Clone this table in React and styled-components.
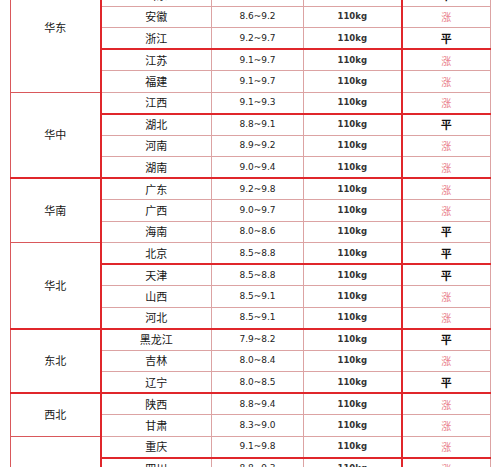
import React from "react";
import styled, { createGlobalStyle } from "styled-components";

const GlobalStyle = createGlobalStyle`
  html, body {
    margin: 0;
    padding: 0;
    background: #fff;
    overflow: hidden;
  }
`;

const STRONG = "#e0262b";
const LIGHT = "#dca3a3";
const REGION = "#d9585b";

const Page = styled.div`
  width: 499px;
  height: 467px;
  overflow: hidden;
  padding-left: 10px;
  box-sizing: border-box;
`;

const Table = styled.table`
  margin-top: -37px;
  width: 480px;
  border-collapse: collapse;
  table-layout: fixed;
  border-left: 1px solid ${REGION};
  border-right: 1px solid ${LIGHT};
`;

const Col = styled.col`
  width: ${(p) => p.$w}px;
`;

const Row = styled.tr`
  height: 21.5px;
`;

const Cell = styled.td`
  padding: 0;
  text-align: center;
  vertical-align: middle;
  color: #161616;
  font-family: "Noto Sans CJK SC", "DejaVu Sans", sans-serif;
  font-size: 11px;
  line-height: 13px;
  border-bottom: ${(p) => (p.$strong ? `2px solid ${STRONG}` : `1px solid ${LIGHT}`)};
  border-right: ${(p) => (p.$edge ? `2px solid ${STRONG}` : `1px solid ${LIGHT}`)};
`;

const RegionCell = styled(Cell)`
  border-bottom: ${(p) => (p.$strong ? `2px solid ${STRONG}` : `1px solid ${REGION}`)};
  border-right: 2px solid ${STRONG};
`;

const NumCell = styled(Cell)`
  font-family: "DejaVu Sans", Verdana, sans-serif;
  font-size: ${(p) => (p.$bold ? "8.5px" : "9px")};
  font-weight: ${(p) => (p.$bold ? 700 : 400)};
  color: ${(p) => (p.$bold ? "#333" : "#222")};
`;

const Trend = styled(Cell)`
  color: ${(p) => (p.$up ? "#e9828b" : "#111")};
  font-weight: ${(p) => (p.$up ? 400 : 700)};
  font-size: ${(p) => (p.$up ? "10px" : "11px")};
`;

const columns = [90, 111, 92, 98, 89];

const regions = [
  {
    name: "华东",
    strongEnd: false,
    rows: [
      ["上海", "9.0~9.5", "涨"],
      ["山东", "8.8~9.3", "平"],
      ["安徽", "8.6~9.2", "涨"],
      ["浙江", "9.2~9.7", "平", true],
      ["江苏", "9.1~9.7", "涨"],
      ["福建", "9.1~9.7", "涨"],
    ],
  },
  {
    name: "华中",
    strongEnd: true,
    rows: [
      ["江西", "9.1~9.3", "涨", true],
      ["湖北", "8.8~9.1", "平"],
      ["河南", "8.9~9.2", "涨"],
      ["湖南", "9.0~9.4", "涨", true],
    ],
  },
  {
    name: "华南",
    strongEnd: false,
    rows: [
      ["广东", "9.2~9.8", "涨"],
      ["广西", "9.0~9.7", "涨"],
      ["海南", "8.0~8.6", "平"],
    ],
  },
  {
    name: "华北",
    strongEnd: true,
    rows: [
      ["北京", "8.5~8.8", "平", true],
      ["天津", "8.5~8.8", "平"],
      ["山西", "8.5~9.1", "涨"],
      ["河北", "8.5~9.1", "涨", true],
    ],
  },
  {
    name: "东北",
    strongEnd: true,
    rows: [
      ["黑龙江", "7.9~8.2", "平"],
      ["吉林", "8.0~8.4", "涨"],
      ["辽宁", "8.0~8.5", "平", true],
    ],
  },
  {
    name: "西北",
    strongEnd: false,
    rows: [
      ["陕西", "8.8~9.4", "涨"],
      ["甘肃", "8.3~9.0", "涨"],
    ],
  },
  {
    name: "西南",
    strongEnd: false,
    rows: [
      ["重庆", "9.1~9.8", "涨", true],
      ["四川", "8.8~9.3", "涨"],
      ["贵州", "8.9~9.5", "涨"],
      ["云南", "8.7~9.3", "平"],
    ],
  },
];

const App = () => {
  return (
    <Page>
      <GlobalStyle />
      <Table>
        <colgroup>
          {columns.map((w, i) => (
            <Col key={i} $w={w} />
          ))}
        </colgroup>
        <tbody>
          {regions.map((region) =>
            region.rows.map(([prov, price, trend, strong], i) => (
              <Row key={prov}>
                {i === 0 && (
                  <RegionCell rowSpan={region.rows.length} $strong={region.strongEnd}>
                    {region.name}
                  </RegionCell>
                )}
                <Cell $strong={strong}>{prov}</Cell>
                <NumCell $strong={strong}>{price}</NumCell>
                <NumCell $strong={strong} $bold $edge>
                  110kg
                </NumCell>
                <Trend $strong={strong} $up={trend === "涨"}>
                  {trend}
                </Trend>
              </Row>
            ))
          )}
        </tbody>
      </Table>
    </Page>
  );
};

export default App;
